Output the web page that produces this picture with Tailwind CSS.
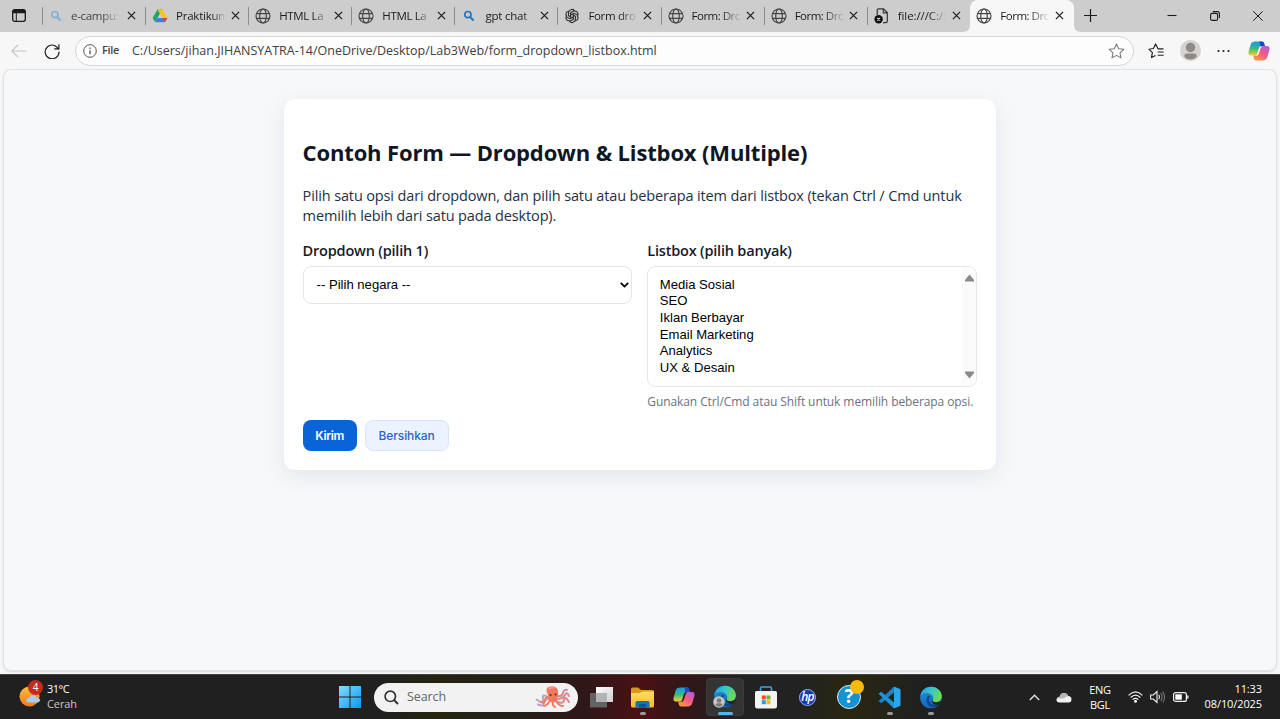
<!DOCTYPE html>
<html lang="id">
<head>
<meta charset="utf-8">
<title>Form: Dropdown &amp; Listbox</title>
<script src="https://cdn.jsdelivr.net/npm/@tailwindcss/browser@4"></script>
</head>
<body class="w-[1280px] h-[719px] overflow-hidden flex flex-col bg-[#f7f7f7] font-['Open_Sans','Noto_Sans',sans-serif] text-[#1b1b1b]">
<svg class="absolute w-0 h-0">
  <defs>
    <symbol id="globe" viewBox="0 0 16 16"><g fill="none" stroke="#444" stroke-width="1.15"><circle cx="8" cy="8" r="7"/><ellipse cx="8" cy="8" rx="3.3" ry="7"/><path d="M1.5 5.6h13M1.5 10.4h13"/></g></symbol>
    <symbol id="close" viewBox="0 0 10 10"><path d="M1 1l8 8M9 1l-8 8" fill="none" stroke="#1b1b1b" stroke-width="1.35"/></symbol>
    <symbol id="lens" viewBox="0 0 16 16"><g fill="none" stroke="currentColor"><circle cx="6.9" cy="6.6" r="3.1" stroke-width="1.7"/><path d="M9.2 9l3.5 3.6" stroke-width="2"/></g></symbol>
    <linearGradient id="e1" x1="0" y1="0" x2="1" y2=".4"><stop offset="0" stop-color="#1f9be0"/><stop offset=".5" stop-color="#34c3cf"/><stop offset="1" stop-color="#6bdc53"/></linearGradient>
    <linearGradient id="e2" x1="0" y1="0" x2=".6" y2="1"><stop offset="0" stop-color="#2390dc"/><stop offset="1" stop-color="#1263b4"/></linearGradient>
    <symbol id="edge" viewBox="0 0 24 24"><circle cx="12" cy="12" r="11.3" fill="url(#e2)"/><path d="M1 10.5C2 4.500 6.500.8 12 .8c6.500 0 11.300 4.700 11.300 10 0 4-3 6.200-6.200 6.200-2.600 0-4.100-1-3.600-2 .8-1 1-2 .7-3.300C13.500 9 10.800 7.300 7.700 7.300 4.800 7.300 2.300 8.500 1 10.500z" fill="url(#e1)"/><path d="M9.200 10.200c-2.700 2.400-2.500 7.300.6 10.100 2.600 2.300 6.800 2.400 10.300.1 1-.7.400-1.500-.5-1.100-4.700 1.800-9.900-1-9.900-5.300 0-1.300.6-2.400 1.500-3.100z" fill="#0d4687"/><path d="M13.300 14.600c1.200 3.200 6.500 3 9.700.2l1 1-3 3.900c-4 1.200-8-.8-8.200-4.200z" fill="#25272a"/></symbol>
    <linearGradient id="c1" x1="0" y1="0" x2="0" y2="1"><stop offset="0" stop-color="#149be8"/><stop offset=".5" stop-color="#39b980"/><stop offset="1" stop-color="#f1d22a"/></linearGradient>
    <linearGradient id="c2" x1="1" y1="0" x2=".2" y2="1"><stop offset="0" stop-color="#a65cf0"/><stop offset=".5" stop-color="#f2598a"/><stop offset="1" stop-color="#fb9a3d"/></linearGradient>
    <symbol id="copilot" viewBox="0 0 22 20"><path d="M7.200.5h6.600c1.300 0 2 .8 2.400 2l.6 2.400h-2.200c-1.600 0-2.400.8-2.900 2.300l-1.600 5c-.5 1.500-1.300 2.200-2.800 2.200H3c-2.200 0-3-1.500-2.400-3.700l2-7C3.300 1.500 4.800.5 7.200.5z" fill="url(#c1)"/><path d="M11.500.5h2.300c1.300 0 2 .8 2.400 2l.6 2.400h-2.200c-1 0-1.700.3-2.200 1z" fill="#1d49c6"/><path d="M14.800 19.500H8.200c-1.300 0-2-.8-2.400-2l-.6-2.900h2.200c1.600 0 2.400-.8 2.900-2.300l1.600-5c.5-1.500 1.300-2.200 2.800-2.200H19c2.200 0 3 1.500 2.400 3.700l-2 7c-.7 2.700-2.200 3.700-4.600 3.700z" fill="url(#c2)"/><path d="M11.900 5.600h2.200q-1.300.9-1.800 2.600l-1.300 4.100q-.5 1.700-1.500 2.100H7.600q1.400-.8 1.900-2.500l1.200-4.100q.4-1.500 1.200-2.200z" fill="currentColor"/></symbol>
    <linearGradient id="win" x1="0" y1="0" x2="1" y2="1"><stop offset="0" stop-color="#80dcff"/><stop offset="1" stop-color="#0a9af0"/></linearGradient>
    <linearGradient id="fold" x1="0" y1="0" x2="0" y2="1"><stop offset="0" stop-color="#ffdc68"/><stop offset="1" stop-color="#f4bb27"/></linearGradient>
    <linearGradient id="sun" x1="0" y1="0" x2="0" y2="1"><stop offset="0" stop-color="#fbbd3e"/><stop offset="1" stop-color="#ef7a20"/></linearGradient>
    <linearGradient id="tv1" x1="0" y1="0" x2="1" y2="1"><stop offset="0" stop-color="#fff"/><stop offset="1" stop-color="#cfcfcf"/></linearGradient>
  </defs>
</svg>

<!-- Tab strip -->
<header class="h-8 shrink-0 flex bg-[#cdcdcd] text-[11.500px]">
  <div class="w-[42px] shrink-0 pt-[9px] pl-3"><svg class="w-[14px] h-[13px]" viewBox="0 0 14 13"><rect x=".7" y=".7" width="12.600" height="11.600" rx="2" fill="none" stroke="#1b1b1b" stroke-width="1.300"/><path d="M.7 3V2Q1 .7 2.500.7h9q1.500 0 1.800 1.300V4.200H.7z" fill="#1b1b1b"/><path d="M4.300 4v8" stroke="#1b1b1b"/></svg></div>

  <div class="w-[103.100px] shrink-0 flex items-center pb-px"><i class="w-px h-[18px] bg-[#8d8d8d]"></i><svg class="w-4 h-4 ml-[5px] text-[#86aed0]"><use href="#lens"/></svg><span class="ml-[7px] w-[48px] whitespace-nowrap tracking-[-0.3px] text-[#444] mask-r-from-65% mask-r-to-100%">e-campus</span><svg class="w-[9px] h-[9px] ml-[8px]"><use href="#close"/></svg></div>

  <div class="w-[103.100px] shrink-0 flex items-center pb-px"><i class="w-px h-[18px] bg-[#8d8d8d]"></i><svg class="w-4 h-4 ml-[6px]" viewBox="0 0 16 16"><path d="M5.500 1.500h5L5.600 10l-2.500 4.200L.6 10z" fill="#22a565"/><path d="M5.500 1.500h5L15.400 10h-5z" fill="#fcc31e"/><path d="M5.600 10h9.800l-2.500 4.200H3.100z" fill="#3f7de8"/><path d="M10.400 10h5l-2.300 4z" fill="#e9473a"/><path d="M8 5.800L10.400 10H5.600z" fill="#cdcdcd"/></svg><span class="ml-[8px] w-[48px] whitespace-nowrap tracking-[-0.25px] mask-r-from-75% mask-r-to-105%">Praktikun</span><svg class="w-[9px] h-[9px] ml-[6.500px]"><use href="#close"/></svg></div>

  <div class="w-[103.100px] shrink-0 flex items-center pb-px"><i class="w-px h-[18px] bg-[#8d8d8d]"></i><svg class="w-4 h-4 ml-[6px]"><use href="#globe"/></svg><span class="ml-[8px] w-[48px] whitespace-nowrap tracking-[-0.35px] mask-r-from-70% mask-r-to-105%">HTML La</span><svg class="w-[9px] h-[9px] ml-[6.500px]"><use href="#close"/></svg></div>

  <div class="w-[103.100px] shrink-0 flex items-center pb-px"><i class="w-px h-[18px] bg-[#8d8d8d]"></i><svg class="w-4 h-4 ml-[6px]"><use href="#globe"/></svg><span class="ml-[8px] w-[48px] whitespace-nowrap tracking-[-0.35px] mask-r-from-70% mask-r-to-105%">HTML La</span><svg class="w-[9px] h-[9px] ml-[6.500px]"><use href="#close"/></svg></div>

  <div class="w-[103.100px] shrink-0 flex items-center pb-px"><i class="w-px h-[18px] bg-[#8d8d8d]"></i><svg class="w-4 h-4 ml-[6px] text-[#2177c4]"><use href="#lens"/></svg><span class="ml-[8px] w-[48px] whitespace-nowrap tracking-[-0.2px] mask-r-from-80% mask-r-to-100%">gpt chat</span><svg class="w-[9px] h-[9px] ml-[6.500px]"><use href="#close"/></svg></div>

  <div class="w-[103.100px] shrink-0 flex items-center pb-px"><i class="w-px h-[18px] bg-[#8d8d8d]"></i><svg class="w-4 h-4 ml-[6px]" viewBox="-8 -8 16 16"><g fill="none" stroke="#333" stroke-width="1.150"><g id="knot"><path d="M-2.800-4.500A3 3 0 0 1 2.400-5.400L-1.500-3.200V1.400"/><path d="M2.800 4.500A3 3 0 0 1-2.400 5.400L1.500 3.200V-1.400"/></g><use href="#knot" transform="rotate(60)"/><use href="#knot" transform="rotate(120)"/></g></svg><span class="ml-[8px] w-[48px] whitespace-nowrap tracking-[-0.35px] mask-r-from-65% mask-r-to-105%">Form dro</span><svg class="w-[9px] h-[9px] ml-[6.500px]"><use href="#close"/></svg></div>

  <div class="w-[103.100px] shrink-0 flex items-center pb-px"><i class="w-px h-[18px] bg-[#8d8d8d]"></i><svg class="w-4 h-4 ml-[6px]"><use href="#globe"/></svg><span class="ml-[8px] w-[48px] whitespace-nowrap tracking-[-0.5px] mask-r-from-60% mask-r-to-105%">Form: Dro</span><svg class="w-[9px] h-[9px] ml-[6.500px]"><use href="#close"/></svg></div>

  <div class="w-[103.100px] shrink-0 flex items-center pb-px"><i class="w-px h-[18px] bg-[#8d8d8d]"></i><svg class="w-4 h-4 ml-[6px]"><use href="#globe"/></svg><span class="ml-[8px] w-[48px] whitespace-nowrap tracking-[-0.5px] mask-r-from-60% mask-r-to-105%">Form: Dro</span><svg class="w-[9px] h-[9px] ml-[6.500px]"><use href="#close"/></svg></div>

  <div class="w-[103.100px] shrink-0 flex items-center pb-px"><i class="w-px h-[18px] bg-[#8d8d8d]"></i><svg class="w-4 h-4 ml-[6px]" viewBox="0 0 16 16"><path d="M3.200 7V2.200Q3.200.9 4.500.9h5l3.800 3.700v8.700q0 1.300-1.300 1.300H9M9.300 1v3.800h4" fill="none" stroke="#333" stroke-width="1.200"/><circle cx="4.600" cy="11.200" r="4.200" fill="#111"/><path d="M3.200 9.800L6 12.600M6 9.800l-2.800 2.800" stroke="#ddd" stroke-width="1.100"/></svg><span class="ml-[8px] w-[48px] whitespace-nowrap tracking-[-0.1px] mask-r-from-65% mask-r-to-100%">file:///C:/:</span><svg class="w-[9px] h-[9px] ml-[6.500px]"><use href="#close"/></svg></div>

  <div class="relative w-[104px] shrink-0 flex items-center pb-px bg-[#f7f7f7] rounded-t-lg">
    <svg class="absolute left-[-7px] bottom-0 w-[7px] h-[7px]" viewBox="0 0 7 7"><path d="M7 0v7H0Q7 7 7 0z" fill="#f7f7f7"/></svg>
    <svg class="absolute right-[-7px] bottom-0 w-[7px] h-[7px]" viewBox="0 0 7 7"><path d="M0 0v7h7Q0 7 0 0z" fill="#f7f7f7"/></svg>
    <svg class="w-4 h-4 ml-[6.500px]"><use href="#globe"/></svg><span class="ml-[8px] w-[48px] whitespace-nowrap tracking-[-0.5px] mask-r-from-60% mask-r-to-105%">Form: Dro</span><svg class="w-[9px] h-[9px] ml-[7px]"><use href="#close"/></svg></div>

  <div class="flex-1 flex items-center pl-[10px] pr-[17px]">
    <svg class="w-[13px] h-[13px] -mt-[2px]" viewBox="0 0 13 13"><path d="M6.500 0v13M0 6.500h13" stroke="#1b1b1b" stroke-width="1.200"/></svg>
    <svg class="w-[10px] h-[10px] ml-auto" viewBox="0 0 10 10"><path d="M.5 4.500h9" stroke="#1b1b1b" stroke-width="1.100"/></svg>
    <svg class="w-[10px] h-[10px] ml-[33px]" viewBox="0 0 10 10"><g fill="none" stroke="#1b1b1b" stroke-width="1.100"><rect x=".6" y="2.400" width="7" height="7" rx="1.500"/><path d="M2.800.6H7.400Q9.400.6 9.400 2.600V7"/></g></svg>
    <svg class="w-[10px] h-[10px] ml-[33px]" viewBox="0 0 10 10"><path d="M.3.3l9.400 9.400M9.700.3L.3 9.700" stroke="#1b1b1b"/></svg>
  </div>
</header>

<!-- Address bar -->
<nav class="h-[36px] shrink-0 flex items-center pt-px">
  <svg class="w-[16px] h-[14px] ml-[11px]" viewBox="0 0 16 14"><path d="M15.500 7H1M7 .8L.8 7 7 13.200" fill="none" stroke="#c3c3c3" stroke-width="1.200"/></svg>
  <svg class="w-4 h-4 ml-[17px] mr-px" viewBox="0 0 16 16"><path d="M14.600 6.600A6.900 6.900 0 1 0 15 8.600M14.900 1.200v4.600h-4.600" fill="none" stroke="#1b1b1b" stroke-width="1.150"/></svg>
  <div class="ml-[14px] w-[1059px] h-[30px] rounded-full bg-[#fdfdfd] border border-[#d6d6d6] flex items-center pl-[7px] pr-2">
    <svg class="w-[14px] h-[14px]" viewBox="0 0 14 14"><circle cx="7" cy="7" r="6.300" fill="none" stroke="#555"/><path d="M7 6.200v4M7 3.600v1.300" stroke="#444" stroke-width="1.200"/></svg>
    <span class="ml-[5px] text-[11px] font-semibold tracking-[-0.3px] text-[#444] w-[30px]">File</span>
    <span class="pt-px text-[12.500px] tracking-[-0.012px] text-[#404040] whitespace-nowrap">C:/Users/jihan.JIHANSYATRA-14/OneDrive/Desktop/Lab3Web/form_dropdown_listbox.html</span>
    <svg class="w-[17px] h-[16px] ml-auto" viewBox="0 0 17 16"><path d="M8.500 1l2.200 4.700 5.100.6-3.800 3.500 1 5.100-4.500-2.500L4 14.900l1-5.100L1.200 6.300l5.100-.6z" fill="none" stroke="#777" stroke-width="1.050" stroke-linejoin="round"/></svg>
  </div>
  <svg class="w-[17px] h-4 ml-[14px]" viewBox="0 0 17 16"><path d="M15.500 5.800H10L7.600 1 5.400 5.500.9 6.200l3.500 3.500-.9 4.900 4-2.200M9.700 9h6M9.700 12.200h6" fill="none" stroke="#222" stroke-width="1.150" stroke-linejoin="round"/></svg>
  <svg class="w-[21px] h-[21px] ml-[14.500px]" viewBox="0 0 21 21"><circle cx="10.500" cy="10.500" r="10.500" fill="#d5d2cf"/><circle cx="10.500" cy="7.500" r="4.700" fill="#8e8a87"/><path d="M4.200 16.500q0-3 3-3h6.600q3 0 3 3-2.300 3-6.300 3t-6.300-3z" fill="#8e8a87"/></svg>
  <svg class="w-[13px] h-[4px] ml-[16.500px]" viewBox="0 0 13 4"><g fill="#222"><circle cx="1.500" cy="2" r="1.100"/><circle cx="6.500" cy="2" r="1.100"/><circle cx="11.500" cy="2" r="1.100"/></g></svg>
  <svg class="w-[22px] h-5 ml-[18px] text-[#f7f7f7]"><use href="#copilot"/></svg>
</nav>

<!-- Page -->
<main class="mx-[3px] mt-px mb-[3px] flex-1 min-h-0 rounded-lg bg-[#f6f8fa] border border-[#e2e3e4] shadow-[0_1px_2px_rgba(0,0,0,0.12)] overflow-hidden">
  <section class="mt-[29px] mx-auto w-[712px] h-[371px] rounded-[11px] bg-white pl-[18.600px] pr-[19px] pt-[38px] shadow-[0_6px_22px_rgba(16,24,40,0.08)]">
    <h1 class="text-[22px] leading-[30px] font-bold tracking-[-0.15px] text-[#0f1724] whitespace-nowrap">Contoh Form — Dropdown &amp; Listbox (Multiple)</h1>
    <p class="mt-[19px] text-[14.500px] leading-5 tracking-[-0.135px] text-[#243044] whitespace-nowrap">Pilih satu opsi dari dropdown, dan pilih satu atau beberapa item dari listbox (tekan Ctrl / Cmd untuk<br>memilih lebih dari satu pada desktop).</p>
    <div class="mt-[14.500px] grid grid-cols-2 gap-[15px] h-[161px]">
      <div>
        <div class="text-[14.500px] leading-5 font-semibold tracking-[-0.2px] text-[#141b2b]">Dropdown (pilih 1)</div>
        <div class="mt-[5.500px] h-[37.500px] border border-[#e3e6ec] rounded-[8px] flex items-center pl-[13px] pr-[2.500px] text-[13.100px] font-['Liberation_Sans',sans-serif] text-black"><span>-- Pilih negara --</span><svg class="ml-auto w-[9px] h-[6px]" viewBox="0 0 9 6"><path d="M.8.9l3.700 3.700L8.200.9" fill="none" stroke="#000" stroke-width="1.800"/></svg></div>
      </div>
      <div>
        <div class="text-[14.500px] leading-5 font-semibold tracking-[-0.2px] text-[#141b2b]">Listbox (pilih banyak)</div>
        <div class="mt-[5.500px] h-[121px] border border-[#e3e6ec] rounded-[8px] flex justify-between pl-[11.500px] overflow-hidden text-[13.100px] leading-[16.700px] font-['Liberation_Sans',sans-serif] text-black">
          <ul class="pt-[9.500px]"><li>Media Sosial</li><li>SEO</li><li>Iklan Berbayar</li><li>Email Marketing</li><li>Analytics</li><li>UX &amp; Desain</li></ul>
          <div class="w-[14px] bg-[#fbfbfb] flex flex-col justify-between items-center py-[7px]"><svg class="w-[9px] h-[8px]" viewBox="0 0 9 8"><path d="M4.500.5L9 6v1.500H0V6z" fill="#898989"/></svg><svg class="w-[9px] h-[8px]" viewBox="0 0 9 8"><path d="M4.500 7.500L9 2V.5H0V2z" fill="#898989"/></svg></div>
        </div>
        <div class="mt-[5px] text-[12px] leading-5 tracking-[-0.09px] text-[#6b7280] whitespace-nowrap">Gunakan Ctrl/Cmd atau Shift untuk memilih beberapa opsi.</div>
      </div>
    </div>
    <div class="mt-[18.500px] flex gap-[8px] h-[31px] text-[12px] font-['Inter',sans-serif]">
      <button class="w-[54px] rounded-[8px] bg-[#0b63d8] text-white font-semibold tracking-[-0.35px]">Kirim</button>
      <button class="w-[84px] rounded-[8px] bg-[#edf2ff] border border-[#d8e4fb] text-[#2b66c4] font-medium tracking-[-0.1px]">Bersihkan</button>
    </div>
  </section>
</main>

<!-- Taskbar -->
<footer class="h-[45px] shrink-0 flex items-center border-t border-[#444] text-white bg-[linear-gradient(90deg,#202020_0px,#202020_380px,#24240f_440px,#22201a_520px,#301618_590px,#4a1114_640px,#301718_690px,#222_740px,#222_800px,#29270f_850px,#202020_920px,#202020_1280px)]">
  <div class="relative w-[24px] h-[26px] ml-[19px] -mt-[4px]">
    <svg class="w-[24px] h-[26px]" viewBox="0 0 24 26"><circle cx="10.500" cy="14.500" r="10" fill="url(#sun)"/><path d="M10.500 20.500q-3.500 0-3.300-2.500.3-2 2.800-2.200 1.500-3.300 4.800-2.500 2 .5 2.700 2.700 3.800.1 3.500 2.500-.3 2-3 2z" fill="#a9cdf5"/></svg>
    <span class="absolute left-[9px] -top-[2px] w-[15px] h-[15px] rounded-full bg-[#c42b1c] text-[10px] leading-[15px] text-center">4</span>
  </div>
  <div class="ml-[4px] -mt-[2px] w-[80px] text-[11px] leading-[15px] tracking-[-0.5px]"><div>31°C</div><div class="text-[#c8c8c8] tracking-[-0.1px]">Cerah</div></div>

  <svg class="w-[22px] h-[22px] ml-[212px] shrink-0" viewBox="0 0 22 22"><path d="M0 0h10.500v10.500H0zM11.500 0H22v10.500H11.500zM0 11.500h10.500V22H0zM11.500 11.500H22V22H11.500z" fill="url(#win)"/></svg>
  <div class="ml-[13px] w-[204px] h-[29px] rounded-full bg-[#f2f2f2] flex items-center pl-[10px] pr-[7px] shrink-0">
    <svg class="w-[15px] h-[15px]" viewBox="0 0 15 15"><circle cx="6.300" cy="6.300" r="5.200" fill="none" stroke="#333" stroke-width="1.700"/><path d="M10 10l4 4" stroke="#333" stroke-width="2"/></svg>
    <span class="ml-[8px] text-[12.500px] tracking-[-0.1px] text-[#666]">Search</span>
    <svg class="w-[36px] h-[24px] ml-auto" viewBox="0 0 36 24"><g fill="none" stroke-linecap="round" stroke-width="2"><path d="M13 12Q7 8 8 14T1.500 14.500M14 14Q9 14 9 18T3 19.500" stroke="#b9a3c9"/><path d="M22 11q5 1 6-3T32 5M22 14q6 0 8-4t4 1M20 16q8 4 9-1t5 2" stroke="#d98a94"/><path d="M15 15q-2 5-6 6M18 16q-1 5 2 6M21 15q2 6 7 6M16 13q-6-2-6 2t-4 2" stroke="#ee7d63"/></g><path d="M13 10Q9 3 15 1.500q6-1 8 4 1 5-2 10-4 4-7 0 0-2-1-5.500z" fill="#f0795c"/><circle cx="15.500" cy="10" r="1" fill="#442a35"/><circle cx="20.500" cy="9.500" r="1" fill="#442a35"/><path d="M14 4q2-2 5-1" stroke="#ffad8c" stroke-width="1.300" fill="none"/></svg>
  </div>
  <svg class="w-[23px] h-[21px] ml-[12px] shrink-0" viewBox="0 0 23 21"><path d="M0 6h17v14.500H0z" fill="#626262"/><path d="M6 0h17v15H6z" fill="url(#tv1)"/><path d="M6 6h11v9H6z" fill="#b4b4b4"/></svg>

  <div class="w-[41px] h-[44px] ml-[9px] flex flex-col items-center pt-[12px] shrink-0"><svg class="w-[23px] h-[21px]" viewBox="0 0 23 21"><path d="M0 2Q0 .5 1.500.5H7l3 2.500h11.500Q23 3 23 4.500V9H0z" fill="#d69a16"/><path d="M0 6h9l2-1.500h12V19q0 1.500-1.500 1.500h-20Q0 20.500 0 19z" fill="url(#fold)"/><path d="M4.500 20.500V15.500q0-1.500 1.500-1.500h11q1.500 0 1.500 1.500v5z" fill="#1672b8"/><path d="M8 17h7v3.500H8z" fill="#0d548e"/></svg><i class="mt-[4px] w-[6px] h-[3px] rounded-full bg-[#9a9a9a]"></i></div>
  <div class="w-[41px] flex justify-center shrink-0 text-[#2b1a1b]"><svg class="w-[22px] h-5"><use href="#copilot"/></svg></div>
  <div class="relative w-[38px] h-[38px] ml-[2px] rounded-[4px] bg-[#343434] border border-[#3b3b3b] flex flex-col items-center pt-[6px] shrink-0"><svg class="w-6 h-[23px]"><use href="#edge"/></svg><svg class="absolute left-[6px] top-[17px] w-[12px] h-[12px]" viewBox="0 0 12 12"><circle cx="6" cy="6" r="5.800" fill="#c9c7c5"/><circle cx="6" cy="4.500" r="2.300" fill="#777"/><path d="M2.500 9.300q0-2 2-2h3q2 0 2 2-3.500 2.700-7 0z" fill="#777"/></svg><i class="mt-[4px] w-[15px] h-[3px] shrink-0 rounded-full bg-[#55b4ea]"></i></div>
  <svg class="w-[22px] h-[23px] ml-[11px] shrink-0" viewBox="0 0 22 23"><path d="M5.500 6V2.500Q5.500 1 7 1h8q1.500 0 1.500 1.500V6" fill="none" stroke="#3ba4e0" stroke-width="1.600"/><path d="M0 6.500Q0 5 1.500 5h19Q22 5 22 6.500V20q0 2.500-2.500 2.500h-17Q0 22.500 0 20z" fill="#f3f3f3"/><path d="M6.800 9.500h4v4h-4z" fill="#e9512e"/><path d="M11.500 9.500h4v4h-4z" fill="#74b820"/><path d="M6.800 14.200h4v4h-4z" fill="#2a9ddc"/><path d="M11.500 14.200h4v4h-4z" fill="#f8b91b"/></svg>
  <div class="w-[17px] h-[17px] ml-[22px] rounded-full bg-[#1439b4] border border-[#9ab0ea] text-[12px] leading-[13px] text-center font-semibold italic tracking-[-0.8px] shrink-0">hp</div>
  <div class="relative w-[24px] h-[24px] ml-[21px] shrink-0 rounded-full bg-[#1592cf] border-[1.500px] border-[#d4edf8] text-[19px] leading-[21px] text-center font-bold">?<i class="absolute left-[12px] -top-[6px] w-[14px] h-[14px] rounded-full bg-[#fcb90f]"></i></div>
  <div class="w-[41px] h-[44px] ml-[8px] flex flex-col items-center pt-[11px] shrink-0"><svg class="w-[23px] h-[23px]" viewBox="0 0 23 23"><path d="M16 .5L22.500 3.300V19.700L16 22.500z" fill="#2ba6ed"/><path d="M16 .5v6L3.300 17.300.5 15.200z" fill="#1b82c9"/><path d="M16 22.500v-6L3.300 5.700.5 7.800z" fill="#1e93dc"/></svg><i class="mt-[3px] w-[6px] h-[3px] rounded-full bg-[#9a9a9a]"></i></div>
  <div class="w-[41px] h-[44px] flex flex-col items-center pt-[11px] shrink-0"><svg class="w-6 h-[23px]"><use href="#edge"/></svg><i class="mt-[3px] w-[6px] h-[3px] rounded-full bg-[#9a9a9a]"></i></div>

  <svg class="w-[11px] h-[7px] ml-auto shrink-0" viewBox="0 0 11 7"><path d="M.8 6l4.700-4.700L10.200 6" fill="none" stroke="#e2e2e2" stroke-width="1.400"/></svg>
  <svg class="w-[16px] h-[11px] ml-[16px] shrink-0" viewBox="0 0 16 11"><path d="M3.500 10.500Q.5 10.500.5 7.800q0-2.500 3-2.800Q4.500 1 8 1q3 0 4.200 3 3.300.3 3.300 3.300 0 3.200-3 3.200z" fill="#f1f1f1"/><path d="M1 6.500Q1.500 5 3.500 5 4.500 1 8 1q3 0 4.200 3L7 6.500z" fill="#b5b5b5"/></svg>
  <div class="ml-[14px] w-[28px] text-[11px] leading-[15px] text-center tracking-[-0.3px] shrink-0"><div>ENG</div><div>BGL</div></div>
  <svg class="w-[15px] h-[12px] ml-[14px] shrink-0" viewBox="0 0 15 12"><g fill="none" stroke="#eee" stroke-width="1.200"><path d="M.6 4.400Q7.500-2.600 14.400 4.400M2.700 6.500q4.800-4.600 9.600 0M4.700 8.600q2.800-2.600 5.600 0"/></g><circle cx="7.500" cy="10.200" r="1.500" fill="#eee"/></svg>
  <svg class="w-[16px] h-[14px] ml-[7px] shrink-0" viewBox="0 0 16 14"><g fill="none" stroke-width="1.100"><path d="M.6 5h2.700L7 1.600v10.800L3.300 9H.6z" stroke="#eee"/><path d="M8.800 4.800q1.400 2.200 0 4.400" stroke="#eee"/><path d="M10.700 3q2.700 4 0 8M12.700 1.500q3.700 5.500 0 11" stroke="#777"/></g></svg>
  <svg class="w-[16px] h-[10px] ml-[7px] shrink-0" viewBox="0 0 16 10"><rect x=".6" y=".6" width="12.800" height="8.800" rx="2" fill="none" stroke="#eee" stroke-width="1.200"/><rect x="2.300" y="2.300" width="6.500" height="5.400" fill="#fff"/><path d="M14.800 3.500v3" stroke="#eee" stroke-width="1.400"/></svg>
  <div class="w-[73px] mr-[18px] -mt-[2px] text-right text-[11px] leading-[15px] tracking-[-0.1px] shrink-0"><div>11:33</div><div>08/10/2025</div></div>
</footer>
</body>
</html>
